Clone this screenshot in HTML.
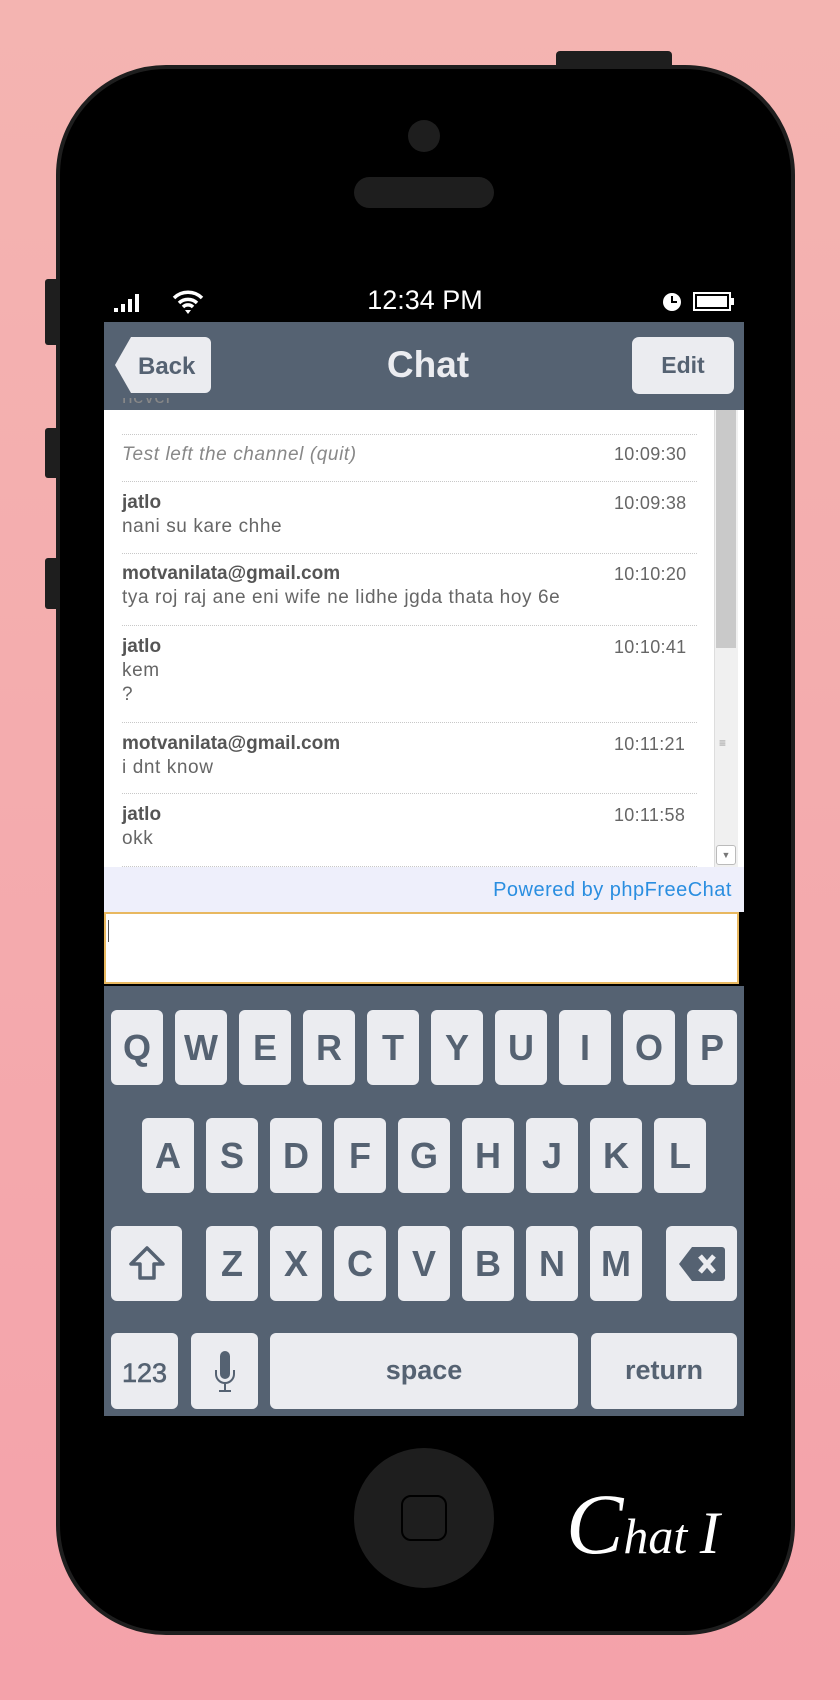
<!DOCTYPE html>
<html><head><meta charset="utf-8"><style>
*{margin:0;padding:0;box-sizing:border-box}
body{width:840px;height:1700px;overflow:hidden;background:linear-gradient(#f4b4b1,#f4a2aa);font-family:"Liberation Sans",sans-serif;position:relative}
.a{position:absolute}
.phone{left:56px;top:65px;width:739px;height:1570px;background:#000;border:4px solid #1e1e1e;border-radius:110px}
.btn{background:#1e1e1e}
.nav{left:104px;top:322px;width:640px;height:88px;background:#556272}
.k{position:absolute;background:#ebecf0;border-radius:6px;color:#556272;font-weight:bold;font-size:36px;text-align:center;line-height:75px}
.msg{position:absolute;left:122px;width:590px;font-size:19px;letter-spacing:0.6px;line-height:24px;color:#666;white-space:nowrap}
.t{position:absolute;left:614px;font-size:18px;letter-spacing:0.3px;color:#666}
.sep{position:absolute;left:122px;width:575px;border-top:1px dotted #c8c8c8}
b{color:#555;letter-spacing:0}
</style></head><body>
<div class="a btn" style="left:556px;top:51px;width:116px;height:18px;border-radius:4px"></div>
<div class="a btn" style="left:45px;top:279px;width:16px;height:66px;border-radius:3px"></div>
<div class="a btn" style="left:45px;top:428px;width:16px;height:50px;border-radius:3px"></div>
<div class="a btn" style="left:45px;top:558px;width:16px;height:51px;border-radius:3px"></div>
<div class="a phone"></div>
<div class="a btn" style="left:408px;top:120px;width:32px;height:32px;border-radius:50%"></div>
<div class="a btn" style="left:354px;top:177px;width:140px;height:31px;border-radius:16px"></div>
<svg class="a" style="left:114px;top:292px" width="40" height="22"><rect x="0" y="16" width="4" height="4" fill="#fff"/><rect x="7" y="12" width="4" height="8" fill="#fff"/><rect x="14" y="7" width="4" height="13" fill="#fff"/><rect x="21" y="2" width="4" height="18" fill="#fff"/></svg>
<svg class="a" style="left:171px;top:288px" width="34" height="26"><path d="M3 10a20 20 0 0 1 28 0M8 15a13 13 0 0 1 18 0M12 19a7 7 0 0 1 10 0" stroke="#fff" stroke-width="3.5" fill="none"/><path d="M14 22l3 4l3-4z" fill="#fff"/></svg>
<div class="a" style="left:325px;top:285px;width:200px;text-align:center;color:#fff;font-size:27px">12:34 PM</div>
<svg class="a" style="left:662px;top:291px" width="74" height="22"><circle cx="10" cy="11" r="9" fill="#fff"/><path d="M10 5v6h5" stroke="#000" stroke-width="2" fill="none"/><rect x="32" y="2" width="36" height="17" fill="none" stroke="#fff" stroke-width="2"/><rect x="35" y="5" width="30" height="11" fill="#fff"/><rect x="69" y="7" width="3" height="7" fill="#fff"/></svg>
<div class="a nav"></div>
<svg class="a" style="left:113px;top:337px" width="100" height="57"><path d="M18 0H92a6 6 0 0 1 6 6V50a6 6 0 0 1-6 6H18L2 28z" fill="#ebecf0"/></svg>
<div class="a" style="left:138px;top:353px;font-size:24px;font-weight:bold;color:#556272">Back</div>
<div class="a" style="left:632px;top:337px;width:102px;height:57px;background:#ebecf0;border-radius:7px;text-align:center;line-height:57px;font-size:23px;font-weight:bold;color:#556272">Edit</div>
<div class="a" style="left:328px;top:344px;width:200px;text-align:center;font-size:37px;font-weight:bold;color:#ebecf0">Chat</div>
<div class="a" style="left:104px;top:410px;width:640px;height:457px;background:#fff"></div>
<div class="msg" style="top:398px;color:#888;height:12px;overflow:hidden"><span style="position:relative;top:-12px">never</span></div>
<div class="sep" style="top:434px"></div>
<div class="msg" style="top:443px;font-style:italic;color:#888">Test left the channel (quit)</div><div class="t" style="top:444px">10:09:30</div>
<div class="sep" style="top:481px"></div>
<div class="msg" style="top:491px"><b>jatlo</b><br>nani su kare chhe</div><div class="t" style="top:493px">10:09:38</div>
<div class="sep" style="top:553px"></div>
<div class="msg" style="top:562px"><b>motvanilata@gmail.com</b><br>tya roj raj ane eni wife ne lidhe jgda thata hoy 6e</div><div class="t" style="top:564px">10:10:20</div>
<div class="sep" style="top:625px"></div>
<div class="msg" style="top:635px"><b>jatlo</b><br>kem<br>?</div><div class="t" style="top:637px">10:10:41</div>
<div class="sep" style="top:722px"></div>
<div class="msg" style="top:732px"><b>motvanilata@gmail.com</b><br>i dnt know</div><div class="t" style="top:734px">10:11:21</div>
<div class="sep" style="top:793px"></div>
<div class="msg" style="top:803px"><b>jatlo</b><br>okk</div><div class="t" style="top:805px">10:11:58</div>
<div class="sep" style="top:866px"></div>
<div class="a" style="left:714px;top:410px;width:24px;height:457px;background:#f0f0f0;border-left:1px solid #ddd"></div>
<div class="a" style="left:716px;top:410px;width:20px;height:238px;background:#c9c9c9"></div>
<div class="a" style="left:719px;top:736px;font-size:12px;color:#999">≡</div>
<div class="a" style="left:716px;top:845px;width:20px;height:20px;background:#fff;border:1px solid #bbb;border-radius:3px;font-size:9px;color:#777;text-align:center;line-height:18px">▼</div>
<div class="a" style="left:104px;top:867px;width:640px;height:45px;background:#eeeffb"></div>
<div class="a" style="left:380px;top:879px;width:352px;text-align:right;color:#2a8ee0;font-size:20px;letter-spacing:0.5px">Powered by phpFreeChat</div>
<div class="a" style="left:104px;top:912px;width:635px;height:72px;background:#fff;border:2px solid #e8b860"></div>
<div class="a" style="left:108px;top:920px;width:1px;height:22px;background:#555"></div>
<div class="a" style="left:104px;top:986px;width:640px;height:430px;background:#556272"></div>
<div class="k" style="left:111px;top:1010px;width:52px;height:75px">Q</div>
<div class="k" style="left:175px;top:1010px;width:52px;height:75px">W</div>
<div class="k" style="left:239px;top:1010px;width:52px;height:75px">E</div>
<div class="k" style="left:303px;top:1010px;width:52px;height:75px">R</div>
<div class="k" style="left:367px;top:1010px;width:52px;height:75px">T</div>
<div class="k" style="left:431px;top:1010px;width:52px;height:75px">Y</div>
<div class="k" style="left:495px;top:1010px;width:52px;height:75px">U</div>
<div class="k" style="left:559px;top:1010px;width:52px;height:75px">I</div>
<div class="k" style="left:623px;top:1010px;width:52px;height:75px">O</div>
<div class="k" style="left:687px;top:1010px;width:50px;height:75px">P</div>
<div class="k" style="left:142px;top:1118px;width:52px;height:75px">A</div>
<div class="k" style="left:206px;top:1118px;width:52px;height:75px">S</div>
<div class="k" style="left:270px;top:1118px;width:52px;height:75px">D</div>
<div class="k" style="left:334px;top:1118px;width:52px;height:75px">F</div>
<div class="k" style="left:398px;top:1118px;width:52px;height:75px">G</div>
<div class="k" style="left:462px;top:1118px;width:52px;height:75px">H</div>
<div class="k" style="left:526px;top:1118px;width:52px;height:75px">J</div>
<div class="k" style="left:590px;top:1118px;width:52px;height:75px">K</div>
<div class="k" style="left:654px;top:1118px;width:52px;height:75px">L</div>
<div class="k" style="left:111px;top:1226px;width:71px;height:75px"><svg width="40" height="40" style="margin-top:18px"><path d="M20 4L4 20h9v14h14V20h9z" fill="none" stroke="#556272" stroke-width="3.5" stroke-linejoin="round"/></svg></div>
<div class="k" style="left:206px;top:1226px;width:52px;height:75px">Z</div>
<div class="k" style="left:270px;top:1226px;width:52px;height:75px">X</div>
<div class="k" style="left:334px;top:1226px;width:52px;height:75px">C</div>
<div class="k" style="left:398px;top:1226px;width:52px;height:75px">V</div>
<div class="k" style="left:462px;top:1226px;width:52px;height:75px">B</div>
<div class="k" style="left:526px;top:1226px;width:52px;height:75px">N</div>
<div class="k" style="left:590px;top:1226px;width:52px;height:75px">M</div>
<div class="k" style="left:666px;top:1226px;width:71px;height:75px"><svg width="48" height="40" style="margin-top:18px"><path d="M14 3H44a3 3 0 0 1 3 3V34a3 3 0 0 1-3 3H14L1 20z" fill="#556272"/><path d="M22 12l14 16M36 12L22 28" stroke="#ebecf0" stroke-width="5"/></svg></div>
<div class="k" style="left:111px;top:1333px;width:67px;height:76px;font-size:27px;line-height:80px;font-weight:normal;-webkit-text-stroke:.6px #556272">123</div>
<div class="k" style="left:191px;top:1333px;width:67px;height:76px"><svg width="30" height="44" style="margin-top:17px"><rect x="10" y="1" width="10" height="28" rx="5" fill="#556272"/><path d="M6 20v4a9 9 0 0 0 18 0v-4M15 33v8M9 41h12" stroke="#556272" stroke-width="2" fill="none"/></svg></div>
<div class="k" style="left:270px;top:1333px;width:308px;height:76px;font-size:27px;line-height:74px">space</div>
<div class="k" style="left:591px;top:1333px;width:146px;height:76px;font-size:27px;line-height:74px">return</div>
<div class="a btn" style="left:354px;top:1448px;width:140px;height:140px;border-radius:50%"></div>
<div class="a" style="left:401px;top:1495px;width:46px;height:46px;border-radius:10px;border:2px solid #000"></div>
<div class="a" style="left:566px;top:1474px;color:#fff;font-family:'Liberation Serif',serif;font-style:italic;font-size:50px;white-space:nowrap"><span style="font-size:86px">C</span>hat <span style="font-size:60px">I</span></div>
</body></html>
